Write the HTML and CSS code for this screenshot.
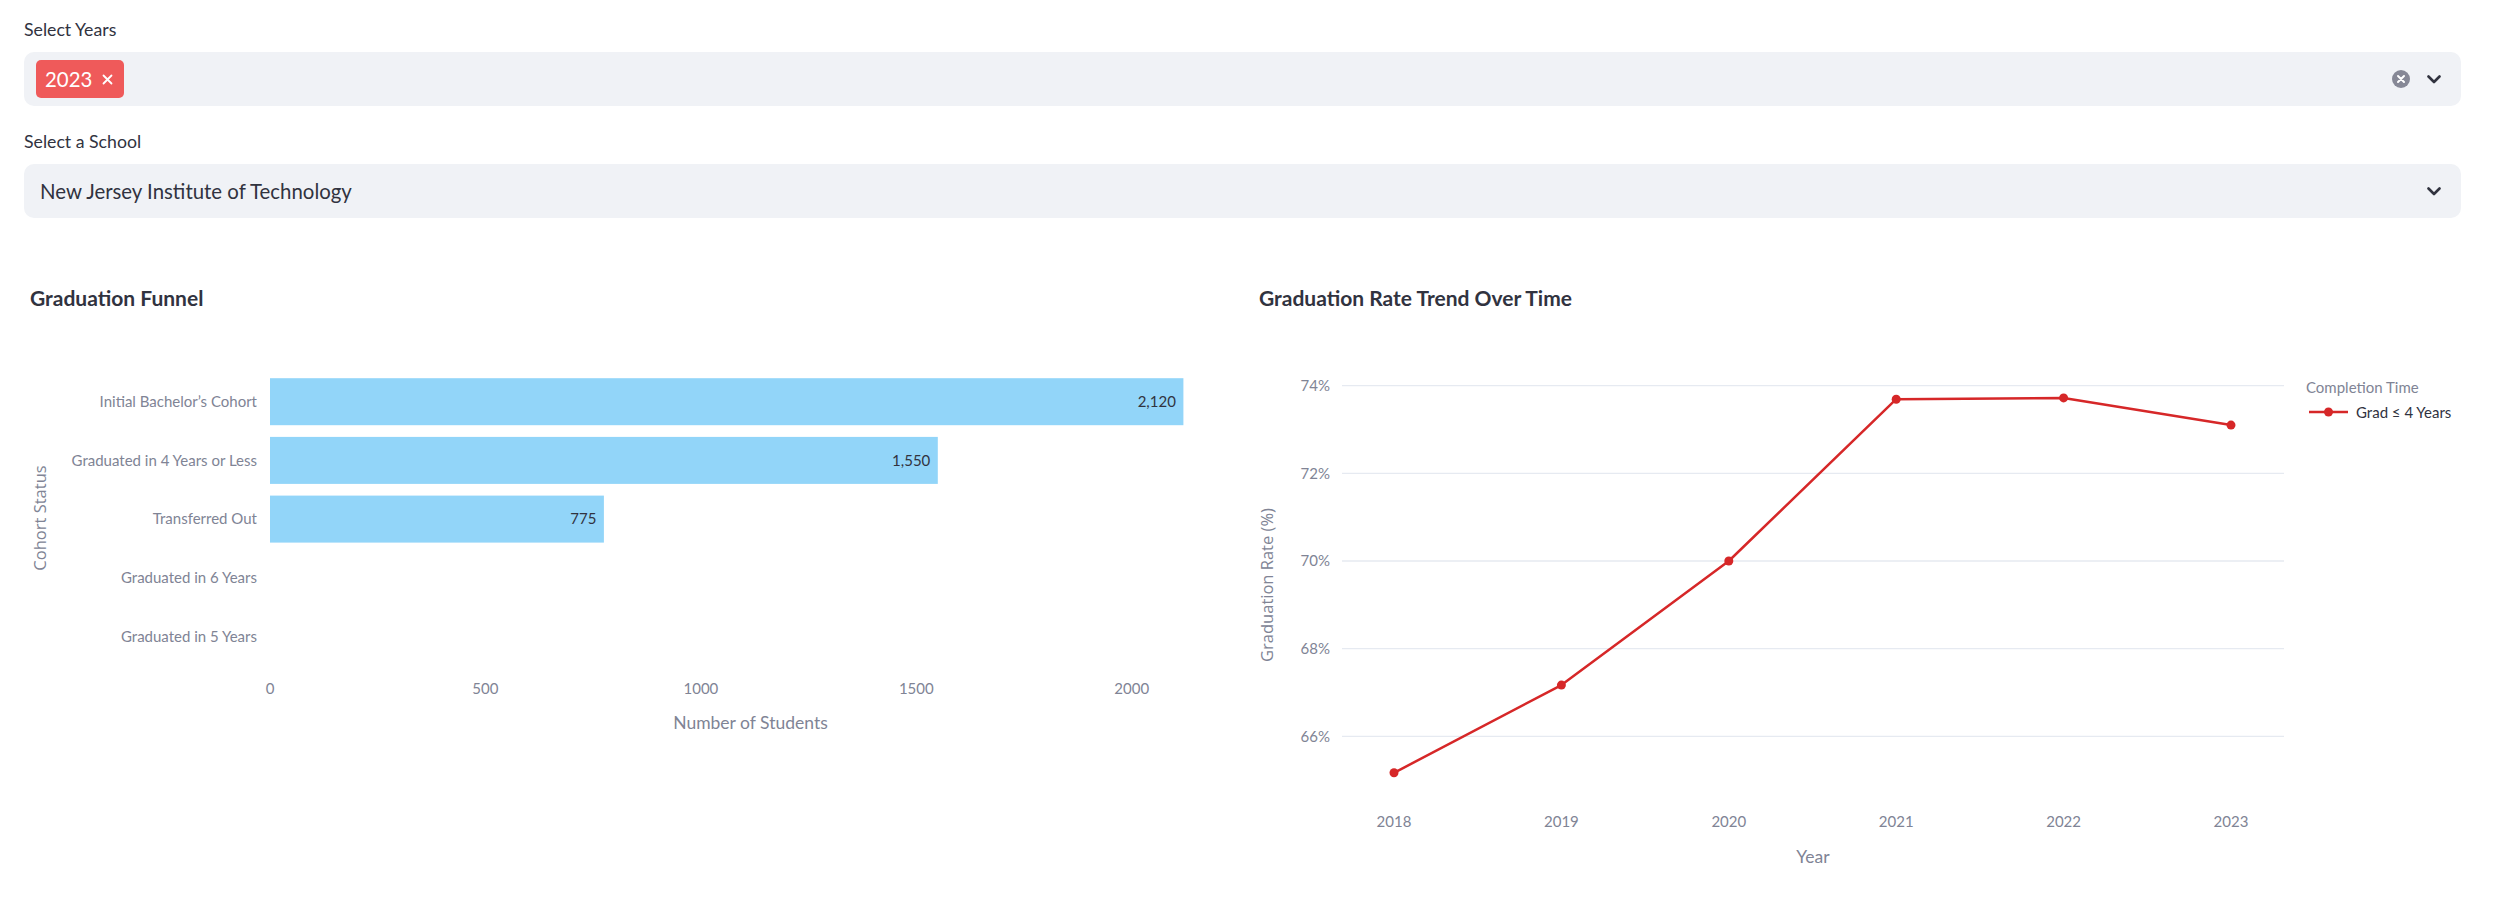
FILE: index.html
```html
<!DOCTYPE html>
<html lang="en">
<head>
<meta charset="utf-8">
<title>Graduation Dashboard</title>
<link rel="stylesheet" href="styles.css">
</head>
<body>
<main class="app">
  <section class="widget">
    <div class="widget-label">Select Years</div>
    <div class="select-box multi">
      <div class="select-value">
        <span class="chip">2023<svg class="chip-x" width="11" height="11" viewBox="0 0 11 11"><path d="M1.5 1.5 L9.5 9.5 M9.5 1.5 L1.5 9.5"/></svg></span>
      </div>
      <div class="select-icons">
        <svg class="clear-icon" width="18" height="18" viewBox="0 0 18 18"><circle cx="9" cy="9" r="9"/><path d="M6 6 L12 12 M12 6 L6 12"/></svg>
        <svg class="chevron" width="14" height="9" viewBox="0 0 14 9"><path d="M1.5 1.5 L7 7 L12.5 1.5"/></svg>
      </div>
    </div>
  </section>

  <section class="widget">
    <div class="widget-label">Select a School</div>
    <div class="select-box single">
      <div class="select-value">New Jersey Institute of Technology</div>
      <div class="select-icons">
        <svg class="chevron" width="14" height="9" viewBox="0 0 14 9"><path d="M1.5 1.5 L7 7 L12.5 1.5"/></svg>
      </div>
    </div>
  </section>

  <section class="charts">
    <div class="chart-col">
      <svg class="chart" width="1208" height="664" viewBox="0 0 1208 664">
        <text class="chart-title" x="6" y="66">Graduation Funnel</text>
        <text class="axis-title-y" transform="translate(21.5 278) rotate(-90)" text-anchor="middle">Cohort Status</text>
        <g class="tick" text-anchor="end">
          <text x="233" y="167">Initial Bachelor’s Cohort</text>
          <text x="233" y="225.7">Graduated in 4 Years or Less</text>
          <text x="233" y="284.4">Transferred Out</text>
          <text x="233" y="343.1">Graduated in 6 Years</text>
          <text x="233" y="401.8">Graduated in 5 Years</text>
        </g>
        <rect class="bar" x="246" y="138.2" width="913.4" height="47"/>
        <rect class="bar" x="246" y="196.9" width="667.8" height="47"/>
        <rect class="bar" x="246" y="255.6" width="333.9" height="47"/>
        <g class="bar-label" text-anchor="end">
          <text x="1151.9" y="167">2,120</text>
          <text x="906.3" y="225.7">1,550</text>
          <text x="572.4" y="284.4">775</text>
        </g>
        <g class="tick" text-anchor="middle">
          <text x="246" y="454.3">0</text>
          <text x="461.4" y="454.3">500</text>
          <text x="676.9" y="454.3">1000</text>
          <text x="892.3" y="454.3">1500</text>
          <text x="1107.7" y="454.3">2000</text>
        </g>
        <text class="axis-title" x="726.5" y="489" text-anchor="middle">Number of Students</text>
      </svg>
    </div>
    <div class="chart-col">
      <svg class="chart" width="1208" height="664" viewBox="0 0 1208 664">
        <text class="chart-title" x="6" y="66">Graduation Rate Trend Over Time</text>
        <g class="grid">
          <line x1="89" x2="1031" y1="145.7" y2="145.7"/>
          <line x1="89" x2="1031" y1="233.4" y2="233.4"/>
          <line x1="89" x2="1031" y1="321" y2="321"/>
          <line x1="89" x2="1031" y1="408.7" y2="408.7"/>
          <line x1="89" x2="1031" y1="496.4" y2="496.4"/>
        </g>
        <g class="tick" text-anchor="end">
          <text x="77" y="151">74%</text>
          <text x="77" y="238.7">72%</text>
          <text x="77" y="326.3">70%</text>
          <text x="77" y="414">68%</text>
          <text x="77" y="501.7">66%</text>
        </g>
        <g class="tick" text-anchor="middle">
          <text x="141" y="587">2018</text>
          <text x="308.4" y="587">2019</text>
          <text x="475.8" y="587">2020</text>
          <text x="643.2" y="587">2021</text>
          <text x="810.6" y="587">2022</text>
          <text x="978" y="587">2023</text>
        </g>
        <text class="axis-title" x="560" y="622.8" text-anchor="middle">Year</text>
        <text class="axis-title-y" transform="translate(19.5 345) rotate(-90)" text-anchor="middle">Graduation Rate (%)</text>
        <polyline class="trend-line" points="141,532.8 308.4,445.1 475.8,321 643.2,159.2 810.6,157.9 978,185.1"/>
        <g class="trend-dot">
          <circle cx="141" cy="532.8" r="4.5"/>
          <circle cx="308.4" cy="445.1" r="4.5"/>
          <circle cx="475.8" cy="321" r="4.5"/>
          <circle cx="643.2" cy="159.2" r="4.5"/>
          <circle cx="810.6" cy="157.9" r="4.5"/>
          <circle cx="978" cy="185.1" r="4.5"/>
        </g>
        <g class="legend">
          <text class="legend-title" x="1053" y="153.3">Completion Time</text>
          <line class="trend-line" x1="1056" x2="1095" y1="172" y2="172"/>
          <circle class="trend-dot" cx="1075.5" cy="172" r="4.5"/>
          <text class="legend-item" x="1103" y="178.3">Grad ≤ 4 Years</text>
        </g>
      </svg>
    </div>
  </section>
</main>
</body>
</html>
```

FILE: styles.css
```css
* {
  box-sizing: border-box;
}

html,
body {
  margin: 0;
  padding: 0;
  background: #ffffff;
}

body {
  width: 2494px;
  height: 904px;
  overflow: hidden;
  font-family: Lato, "Liberation Sans", sans-serif;
  color: #31333f;
}

.app {
  display: flex;
  flex-direction: column;
  padding: 18px 33px 0 24px;
}

.widget {
  display: flex;
  flex-direction: column;
}

.widget + .widget {
  margin-top: 24px;
}

.widget-label {
  font-size: 17.7px;
  line-height: 24px;
  margin-bottom: 10px;
}

.select-box {
  display: flex;
  align-items: center;
  height: 54px;
  background: #f0f2f6;
  border-radius: 10px;
  padding: 0 20px 0 12px;
}

.select-box.single {
  padding-left: 16px;
}

.select-value {
  flex: 1;
  display: flex;
  align-items: center;
  font-size: 20.4px;
  line-height: 24px;
}

.chip {
  display: inline-flex;
  align-items: center;
  gap: 10px;
  height: 38px;
  padding: 0 11px 0 9px;
  background: #ef5a5a;
  color: #ffffff;
  border-radius: 5px;
}

.chip-x path {
  stroke: #ffffff;
  stroke-width: 1.8;
  stroke-linecap: round;
  fill: none;
}

.select-icons {
  display: flex;
  align-items: center;
  gap: 17px;
}

.select-icons svg {
  display: block;
}

.clear-icon circle {
  fill: #868896;
}

.clear-icon path {
  stroke: #ffffff;
  stroke-width: 2;
  stroke-linecap: round;
  fill: none;
}

.chevron path {
  stroke: #31333f;
  stroke-width: 2.6;
  stroke-linecap: round;
  stroke-linejoin: round;
  fill: none;
}

.charts {
  display: grid;
  grid-template-columns: 1fr 1fr;
  column-gap: 21px;
  margin-top: 22px;
}

.chart {
  display: block;
  width: 1208px;
  height: 664px;
}

.chart-title {
  font-family: Lato, "Liberation Sans", sans-serif;
  font-weight: 700;
  font-size: 21px;
  fill: #31333f;
}

.tick {
  font-family: Lato, "Liberation Sans", sans-serif;
  font-size: 15px;
  fill: #808495;
}

.bar {
  fill: #92d5f9;
}

.bar-label {
  font-family: Lato, "Liberation Sans", sans-serif;
  font-size: 15px;
  fill: #31333f;
}

.axis-title {
  font-family: Lato, "Liberation Sans", sans-serif;
  font-size: 17.5px;
  fill: #808495;
}

.axis-title-y {
  font-family: "Open Sans", "Liberation Sans", sans-serif;
  font-size: 16.5px;
  fill: #808495;
}

.grid line {
  stroke: #e6eaf1;
  stroke-width: 1.3;
}

.trend-line {
  fill: none;
  stroke: #d62728;
  stroke-width: 2.5;
  stroke-linejoin: round;
}

.trend-dot,
.trend-dot circle {
  fill: #d62728;
}

.legend-title {
  font-family: Lato, "Liberation Sans", sans-serif;
  font-size: 15px;
  fill: #808495;
}

.legend-item {
  font-family: Lato, "Liberation Sans", sans-serif;
  font-size: 15px;
  fill: #31333f;
}
```
